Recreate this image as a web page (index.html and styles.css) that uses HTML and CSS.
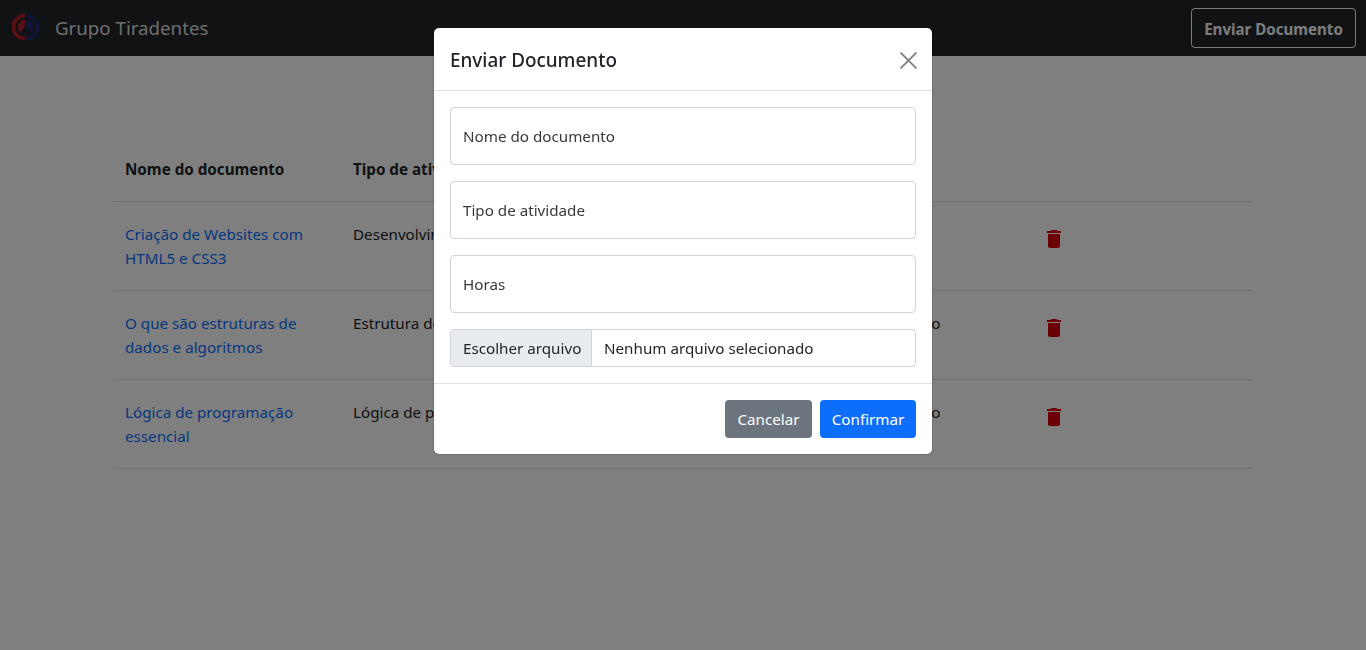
FILE: index.html
```html
<!DOCTYPE html>
<html lang="pt-BR">
<head>
<meta charset="utf-8">
<title>Grupo Tiradentes</title>
<link rel="stylesheet" href="styles.css">
</head>
<body>
<nav class="navbar">
  <a class="brand" href="#">
    <svg class="logo" viewBox="0 0 28 28" width="27" height="28" aria-hidden="true">
      <path d="M13.5 0 A14 14 0 0 0 13.5 28 L13.5 24 A10 10 0 0 1 13.5 4 Z" fill="#b01f2b"/>
      <path d="M13.5 6 A8 8 0 0 0 9 20 L13.5 13 Z" fill="#b01f2b"/>
      <path d="M14.5 0 A14 14 0 0 1 14.5 28 L14.5 24 A10 10 0 0 0 14.5 4 Z" fill="#20286f"/>
      <path d="M14.5 6 A8 8 0 0 1 19 20 L14.5 13 Z" fill="#20286f"/>
    </svg>
    <span class="brand-name">Grupo Tiradentes</span>
  </a>
  <button class="btn-outline" type="button">Enviar Documento</button>
</nav>

<main class="container">
  <table class="docs">
    <thead>
      <tr><th>Nome do documento</th><th>Tipo de atividade</th><th>Horas</th><th>Status</th><th></th></tr>
    </thead>
    <tbody>
      <tr>
        <td><a href="#">Criação de Websites com HTML5 e CSS3</a></td>
        <td>Desenvolvimento web</td><td>10</td><td>Confirmado</td>
        <td><svg class="trash" viewBox="0 0 24 24" aria-hidden="true"><path d="M6 19c0 1.1.9 2 2 2h8c1.1 0 2-.9 2-2V7H6v12zM19 4h-3.5l-1-1h-5l-1 1H5v2h14V4z"/></svg></td>
      </tr>
      <tr>
        <td><a href="#">O que são estruturas de dados e algoritmos</a></td>
        <td>Estrutura de dados</td><td>20</td><td>Aguardando envio</td>
        <td><svg class="trash" viewBox="0 0 24 24" aria-hidden="true"><path d="M6 19c0 1.1.9 2 2 2h8c1.1 0 2-.9 2-2V7H6v12zM19 4h-3.5l-1-1h-5l-1 1H5v2h14V4z"/></svg></td>
      </tr>
      <tr>
        <td><a href="#">Lógica de programação essencial</a></td>
        <td>Lógica de programação</td><td>15</td><td>Aguardando envio</td>
        <td><svg class="trash" viewBox="0 0 24 24" aria-hidden="true"><path d="M6 19c0 1.1.9 2 2 2h8c1.1 0 2-.9 2-2V7H6v12zM19 4h-3.5l-1-1h-5l-1 1H5v2h14V4z"/></svg></td>
      </tr>
    </tbody>
  </table>
</main>

<div class="backdrop"></div>

<div class="modal" role="dialog" aria-modal="true">
  <header class="modal-header">
    <h5 class="modal-title">Enviar Documento</h5>
    <button class="close" type="button" aria-label="Fechar">
      <svg viewBox="0 0 16 16" aria-hidden="true"><path d="M.5.5l15 15M15.5.5l-15 15"/></svg>
    </button>
  </header>
  <div class="modal-body">
    <input class="field" type="text" placeholder="Nome do documento">
    <input class="field" type="text" placeholder="Tipo de atividade">
    <input class="field" type="text" placeholder="Horas">
    <div class="file">
      <span class="file-btn">Escolher arquivo</span>
      <span class="file-name">Nenhum arquivo selecionado</span>
    </div>
  </div>
  <footer class="modal-footer">
    <button class="btn btn-secondary" type="button">Cancelar</button>
    <button class="btn btn-primary" type="button">Confirmar</button>
  </footer>
</div>
</body>
</html>
```
FILE: styles.css
```css
* { box-sizing: border-box; }
html, body { height: 100%; }
body {
  margin: 0;
  background: #fff;
  color: #212529;
  font: 400 15.2px/24px "Noto Sans", "Open Sans", sans-serif;
  overflow: hidden;
}
.navbar {
  height: 56px;
  background: #212529;
  display: flex;
  align-items: center;
  justify-content: space-between;
  padding: 0 10px 0 12px;
}
.brand {
  display: flex;
  align-items: center;
  gap: 16px;
  color: rgba(255,255,255,.85);
  text-decoration: none;
  font-size: 18.7px;
}
.logo { display: block; margin-top: -2px; }
.btn-outline {
  width: 165px;
  height: 40px;
  padding: 1px 0 0;
  background: transparent;
  border: 1px solid #f8f9fa;
  border-radius: 4px;
  color: #f8f9fa;
  font: 700 15.1px/24px "Noto Sans", "Open Sans", sans-serif;
}
.container { width: 1140px; margin: 81px auto 0; }
.docs { width: 100%; border-collapse: collapse; table-layout: fixed; }
.docs th, .docs td {
  padding: 20px 12px;
  text-align: left;
  vertical-align: top;
  border-bottom: 1px solid #dee2e6;
}
.docs th { font-weight: 700; }
.docs a { color: #0d6efd; text-decoration: none; }
.trash { width: 24px; height: 24px; fill: #d8000f; display: block; margin: 5px 0 0 5px; }
.backdrop { position: fixed; inset: 0; background: rgba(0,0,0,.5); }
.modal {
  position: fixed;
  top: 28px;
  left: 434px;
  width: 498px;
  height: 426px;
  background: #fff;
  border-radius: 5px;
  box-shadow: 0 0 2px rgba(0,0,0,.4);
  display: flex;
  flex-direction: column;
}
.modal-header {
  height: 63px;
  padding: 2px 15px 0 16px;
  display: flex;
  align-items: center;
  justify-content: space-between;
  border-bottom: 1px solid #dee2e6;
}
.modal-title { margin: 0; font-size: 18.9px; line-height: 24px; font-weight: 500; }
.close { background: none; border: 0; padding: 0; display: flex; }
.close svg { stroke: #7f7f7f; stroke-width: 1.7; fill: none; width: 17px; height: 17px; }
.modal-body {
  padding: 16px;
  display: flex;
  flex-direction: column;
  gap: 16px;
  border-bottom: 1px solid #dee2e6;
}
.field {
  height: 58px;
  padding: 0 12px;
  border: 1px solid #ced4da;
  border-radius: 4px;
  font: inherit;
  color: #212529;
  outline: 0;
}
.field::placeholder { color: #212529; opacity: .9; }
.file {
  height: 38px;
  display: flex;
  border: 1px solid #ced4da;
  border-radius: 4px;
  overflow: hidden;
}
.file-btn {
  flex: 0 0 141px;
  padding: 6px 0 6px 12px;
  background: #e9ecef;
  border-right: 1px solid #ced4da;
  white-space: nowrap;
  overflow: hidden;
}
.file-name { padding: 6px 12px; }
.modal-footer {
  flex: 1;
  padding: 0 16px;
  display: flex;
  align-items: center;
  justify-content: flex-end;
  gap: 8px;
}
.btn {
  height: 38px;
  border: 0;
  padding: 0;
  border-radius: 4px;
  color: #fff;
  font: inherit;
}
.btn-secondary { background: #6c757d; width: 87px; }
.btn-primary { background: #0d6efd; width: 96px; }
```
